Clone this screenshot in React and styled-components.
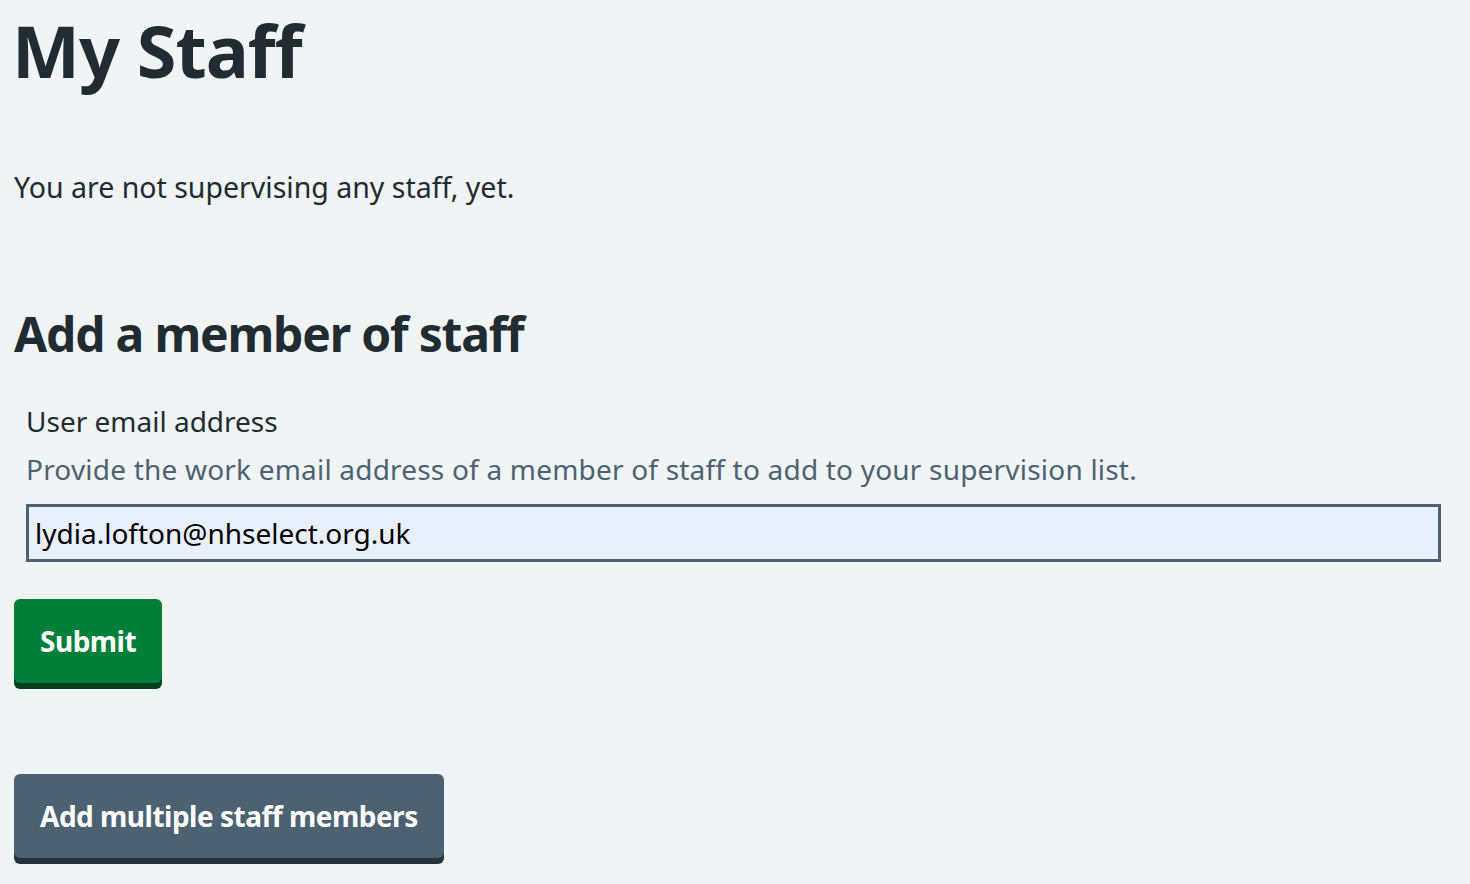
import React from 'react';
import styled, { createGlobalStyle } from 'styled-components';

const GlobalStyle = createGlobalStyle`
    html, body {
        margin: 0;
        padding: 0;
        background: #f0f4f5;
    }
    body {
        font-family: "Noto Sans", "Open Sans", Arial, sans-serif;
        color: #212b32;
    }
`;

const Page = styled.main`
    padding: 0 29px 20px 12px;
`;

const Title = styled.h1`
    font-size: 72px;
    line-height: 1.1;
    font-weight: 700;
    margin: 11px 0 0;
    letter-spacing: -1px;
`;

const Lead = styled.p`
    font-size: 28.5px;
    line-height: 1.4;
    margin: 78px 0 0 2px;
`;

const SectionTitle = styled.h2`
    font-size: 48px;
    line-height: 1.2;
    font-weight: 700;
    letter-spacing: -1.2px;
    margin: 97px 0 0 2px;
`;

const FormGroup = styled.div`
    padding-left: 14px;
    margin-top: 39px;
`;

const Label = styled.label`
    display: block;
    font-size: 28px;
    line-height: 1.4;
`;

const Hint = styled.div`
    font-size: 28px;
    line-height: 1.4;
    color: #4c6272;
    letter-spacing: 0.2px;
    margin-top: 9px;
`;

const Input = styled.input`
    display: block;
    box-sizing: border-box;
    width: 100%;
    height: 58px;
    margin-top: 15px;
    padding: 0 6px;
    border: 3px solid #4c6272;
    border-radius: 0;
    background: #e8effd;
    font-family: inherit;
    font-size: 28px;
    color: #000;
    outline: none;
`;

const Button = styled.button`
    display: block;
    box-sizing: border-box;
    margin: ${(p) => p.$mt}px 0 0 2px;
    height: 84px;
    padding: 0 26px;
    border: 0;
    border-radius: 6px;
    background: ${(p) => p.$bg};
    box-shadow: 0 6px 0 ${(p) => p.$shadow};
    color: #fff;
    font-family: inherit;
    font-size: 28px;
    font-weight: 700;
    letter-spacing: -0.5px;
    cursor: pointer;
`;

export default function App() {
    return (
        <>
            <GlobalStyle />
            <Page>
                <Title>My Staff</Title>
                <Lead>You are not supervising any staff, yet.</Lead>
                <SectionTitle>Add a member of staff</SectionTitle>
                <FormGroup>
                    <Label htmlFor="email">User email address</Label>
                    <Hint>
                        Provide the work email address of a member of staff to add to your
                        supervision list.
                    </Hint>
                    <Input id="email" type="email" defaultValue="lydia.lofton@nhselect.org.uk" />
                </FormGroup>
                <Button $mt={37} $bg="#007f3b" $shadow="#00401e">
                    Submit
                </Button>
                <Button $mt={91} $bg="#4c6272" $shadow="#263139">
                    Add multiple staff members
                </Button>
            </Page>
        </>
    );
}
